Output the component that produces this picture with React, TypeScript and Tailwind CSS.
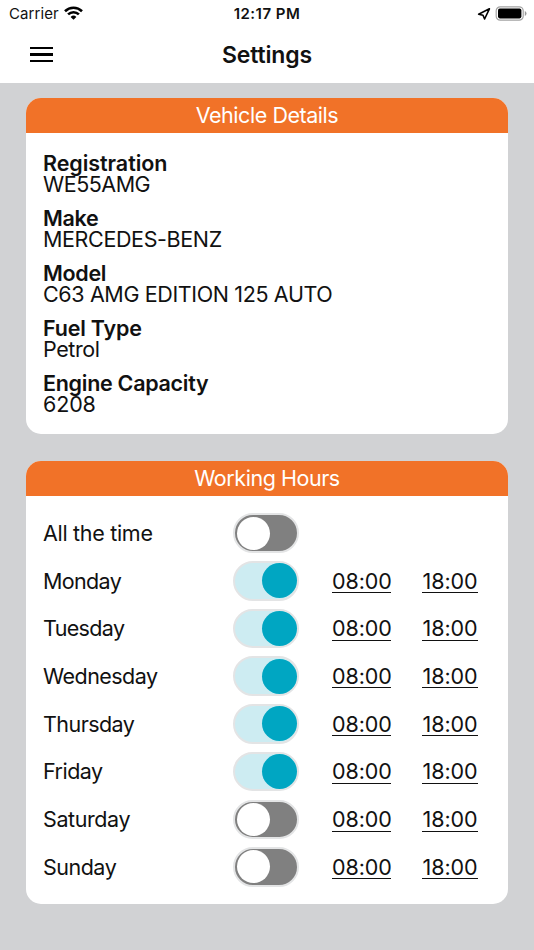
import React from 'react';

const details = [
  { label: 'Registration', value: 'WE55AMG', ls: 'tracking-[-0.06px]', vs: 'tracking-[-0.48px]' },
  { label: 'Make', value: 'MERCEDES-BENZ', ls: 'tracking-[-0.3px]', vs: 'tracking-[-0.37px]' },
  { label: 'Model', value: 'C63 AMG EDITION 125 AUTO', ls: 'tracking-[-0.3px]', vs: 'tracking-[-0.37px]' },
  { label: 'Fuel Type', value: 'Petrol', ls: 'tracking-[-0.2px]', vs: 'tracking-[-0.4px]' },
  { label: 'Engine Capacity', value: '6208', ls: 'tracking-[-0.28px]', vs: 'tracking-[-0.15px]' },
];

const days = [
  { name: 'All the time', on: false, hours: false, ls: 'tracking-[-0.3px]' },
  { name: 'Monday', on: true, hours: true, ls: 'tracking-[-0.65px]' },
  { name: 'Tuesday', on: true, hours: true, ls: 'tracking-[-0.65px]' },
  { name: 'Wednesday', on: true, hours: true, ls: 'tracking-[-0.55px]' },
  { name: 'Thursday', on: true, hours: true, ls: 'tracking-[-0.55px]' },
  { name: 'Friday', on: true, hours: true, ls: 'tracking-[-0.5px]' },
  { name: 'Saturday', on: false, hours: true, ls: 'tracking-[-0.4px]' },
  { name: 'Sunday', on: false, hours: true, ls: 'tracking-[-0.5px]' },
];

function StatusBar() {
  return (
    <div className="grid h-[27px] grid-cols-3 items-center text-[15px] leading-[27px]">
      <div className="flex items-center pl-[9px]">
        <span className="w-[55px] whitespace-nowrap tracking-[0.1px]">Carrier</span>
        <svg className="-mt-[1.5px] h-[14px] w-[19px]" viewBox="0 0 19 14" fill="none" stroke="#000" strokeWidth="2.6">
          <path d="M1 5.2a12.2 12.2 0 0 1 17 0" />
          <path d="M4.1 8.4a7.7 7.7 0 0 1 10.8 0" />
          <path d="M6.6 10.9a4.1 4.1 0 0 1 5.8 0L9.5 13.8z" fill="#000" stroke="none" />
        </svg>
      </div>
      <div className="text-center font-semibold tracking-[0.5px] whitespace-nowrap">12:17 PM</div>
      <div className="flex items-center justify-end pr-[7px]">
        <svg className="mr-[4px] h-[14px] w-[14px]" viewBox="0 0 14 14" fill="none" stroke="#000" strokeWidth="1.6" strokeLinejoin="round">
          <path d="M12.4 1.8 1.6 7.2 6 8.2 7.6 12z" />
        </svg>
        <svg className="-mt-px h-[15px] w-[32px]" viewBox="0 0 32 15">
          <rect x="1.2" y="0.8" width="27" height="13.4" rx="4" fill="none" stroke="#a3a3a3" strokeWidth="1.2" />
          <rect x="3" y="2.6" width="23.4" height="9.8" rx="1.8" fill="#000" />
          <path d="M29.8 5.1v4.8q1.7-.8 1.7-2.4t-1.7-2.4z" fill="#999" />
        </svg>
      </div>
    </div>
  );
}

function Card({ title, className, children }: { title: string; className: string; children: React.ReactNode }) {
  return (
    <section className={`overflow-hidden rounded-[15px] bg-white ${className}`}>
      <h2 className="h-[35.3px] bg-[#f17228] text-center text-[21.5px] leading-[35.3px] font-normal tracking-[-0.45px] text-white">{title}</h2>
      {children}
    </section>
  );
}

function Toggle({ on }: { on: boolean }) {
  return (
    <div
      className={`flex h-[39.5px] w-[66px] items-center rounded-full border-2 border-[#e3e4e5] ${
        on ? 'justify-end bg-[#cdecf2] pr-[0.5px]' : 'bg-[#808080] pl-[1.5px]'
      }`}
    >
      <div className={`rounded-full ${on ? 'size-[35px] bg-[#00a6c2]' : 'size-[33px] bg-white'}`} />
    </div>
  );
}

function Time({ children }: { children: string }) {
  return (
    <span className="h-[24.6px] border-b-[1.4px] border-[#111] text-center leading-[25px] tracking-[-0.1px] whitespace-nowrap">
      {children}
    </span>
  );
}

export default function App() {
  return (
    <div className="h-[950px] w-[534px] overflow-hidden bg-[#d1d2d4] font-['Inter',sans-serif] text-[#111]">
      <header className="h-[83px] bg-white">
        <StatusBar />
        <div className="grid h-[55px] grid-cols-[1fr_auto_1fr] items-center">
          <div className="ml-[30px] flex w-[23px] flex-col gap-[4.2px]">
            <div className="h-[2.4px] bg-black" />
            <div className="h-[2.4px] bg-black" />
            <div className="h-[2.4px] bg-black" />
          </div>
          <h1 className="pt-px text-[23px] font-semibold tracking-[-0.15px]">Settings</h1>
        </div>
      </header>
      <main className="px-[26px] pt-[14.5px]">
        <Card title="Vehicle Details" className="h-[336px]">
          <dl className="flex flex-col gap-[13px] pt-[20px] pl-[17px] text-[21.5px] leading-[21px]">
            {details.map((d) => (
              <div key={d.label}>
                <dt className={`font-semibold ${d.ls}`}>{d.label}</dt>
                <dd className={`font-normal ${d.vs}`}>{d.value}</dd>
              </div>
            ))}
          </dl>
        </Card>
        <Card title="Working Hours" className="mt-[27.2px] h-[443px]">
          <div className="pt-[13.3px] pl-[17px] text-[21.5px]">
            {days.map((d) => (
              <div key={d.name} className="grid h-[47.7px] grid-cols-[190px_99px_59px_31px_56px] items-center">
                <span className={d.ls}>{d.name}</span>
                <Toggle on={d.on} />
                {d.hours && (
                  <>
                    <Time>08:00</Time>
                    <span />
                    <Time>18:00</Time>
                  </>
                )}
              </div>
            ))}
          </div>
        </Card>
      </main>
    </div>
  );
}
